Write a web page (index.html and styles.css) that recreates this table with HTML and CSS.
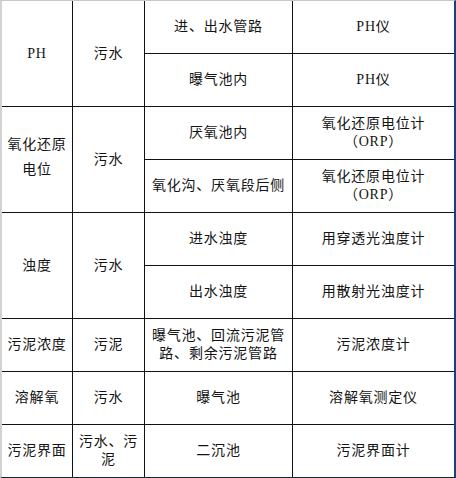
FILE: index.html
```html
<!DOCTYPE html>
<html lang="zh">
<head>
<meta charset="utf-8">
<link rel="stylesheet" href="styles.css">
</head>
<body>
<div class="frame">
  <div class="grid">
    <div class="cell c1 span2">PH</div>
    <div class="cell c2 span2">污水</div>
    <div class="cell c3">进、出水管路</div>
    <div class="cell c4">PH仪</div>
    <div class="cell c3">曝气池内</div>
    <div class="cell c4">PH仪</div>

    <div class="cell c1 span2 tall">氧化还原电位</div>
    <div class="cell c2 span2">污水</div>
    <div class="cell c3">厌氧池内</div>
    <div class="cell c4">氧化还原电位计<br>（ORP）</div>
    <div class="cell c3">氧化沟、厌氧段后侧</div>
    <div class="cell c4">氧化还原电位计<br>（ORP）</div>

    <div class="cell c1 span2">浊度</div>
    <div class="cell c2 span2">污水</div>
    <div class="cell c3">进水浊度</div>
    <div class="cell c4">用穿透光浊度计</div>
    <div class="cell c3">出水浊度</div>
    <div class="cell c4">用散射光浊度计</div>

    <div class="cell c1">污泥浓度</div>
    <div class="cell c2">污泥</div>
    <div class="cell c3">曝气池、回流污泥管路、剩余污泥管路</div>
    <div class="cell c4">污泥浓度计</div>

    <div class="cell c1">溶解氧</div>
    <div class="cell c2">污水</div>
    <div class="cell c3">曝气池</div>
    <div class="cell c4">溶解氧测定仪</div>

    <div class="cell c1">污泥界面</div>
    <div class="cell c2">污水、污泥</div>
    <div class="cell c3">二沉池</div>
    <div class="cell c4">污泥界面计</div>
  </div>
</div>
</body>
</html>
```

FILE: styles.css
```css
html, body {
  margin: 0;
  padding: 0;
  background: #ffffff;
}

.frame {
  width: 456px;
  height: 478px;
  box-sizing: border-box;
  border-top: 1px solid #c8c8c8;
  border-left: 2px solid #d2d2d2;
  border-right: 2px solid #1d3e7c;
  border-bottom: 1px solid #1c2434;
  background: #fff;
}

.grid {
  display: grid;
  grid-template-columns: 70px 71px 147px 161px;
  grid-template-rows: repeat(9, 52px);
  column-gap: 1px;
  row-gap: 1px;
  background: #111;
  width: 452px;
  height: 476px;
}

.cell {
  background: #fff;
  display: flex;
  align-items: center;
  justify-content: center;
  text-align: center;
  font-family: "Liberation Serif", "Noto Sans CJK SC", serif;
  font-size: 14px;
  letter-spacing: 0.8px;
  line-height: 18px;
  color: #141414;
  padding: 0 3px;
  box-sizing: border-box;
}

.span2 {
  grid-row: span 2;
}

.tall {
  line-height: 25px;
  padding-bottom: 6px;
}
```
